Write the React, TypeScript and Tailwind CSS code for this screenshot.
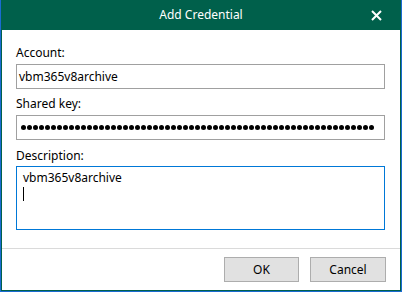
import React from "react";

const font = { fontFamily: '"Segoe UI", "Noto Sans", "Open Sans", sans-serif' };

function Label({ children }: { children: React.ReactNode }) {
  return <div className="h-4 text-[12px] leading-4 text-black">{children}</div>;
}

export default function App() {
  const dots = Array.from({ length: 59 });

  return (
    <div className="w-[402px] h-[292px] bg-[#1a6bd1] pl-[1px]" style={font}>
      <div className="w-[400px] h-[291px] flex flex-col bg-white border-x border-b border-[#00604b]">
        {/* title bar */}
        <div className="h-[30px] shrink-0 bg-[#00604b] grid grid-cols-[1fr_auto_1fr] items-center text-white">
          <div />
          <div className="text-[12px] leading-4">Add Credential</div>
          <div className="flex justify-end pr-[18px]">
            <svg width="11" height="11" viewBox="0 0 11 11">
              <path d="M1 1 L10 10 M10 1 L1 10" stroke="white" strokeWidth="2" />
            </svg>
          </div>
        </div>

        {/* form */}
        <div className="flex flex-col pl-[14px] pt-[15px]">
          <Label>Account:</Label>
          <div className="mt-[3px] w-[369px] h-[25px] border border-[#a0a0a0] flex items-center pl-[2px] text-[12px] text-black">
            vbm365v8archive
          </div>

          <div className="mt-[7px]">
            <Label>Shared key:</Label>
          </div>
          <div className="mt-[3px] w-[369px] h-[25px] border border-[#a0a0a0] flex items-center pl-[4px] gap-[1px]">
            {dots.map((_, i) => (
              <span key={i} className="w-[5px] h-[5px] rounded-full bg-black shrink-0" />
            ))}
          </div>

          <div className="mt-[8px]">
            <Label>Description:</Label>
          </div>
          <div className="mt-[2px] w-[369px] h-[64px] border border-[#0078d7] pl-[6px] pt-[3px] text-[12px] leading-4 text-black">
            <div>vbm365v8archive</div>
            <div className="w-px h-[14px] bg-black mt-[1px]" />
          </div>
        </div>

        <div className="mt-[18px] h-px bg-[#dadada]" />

        {/* footer */}
        <div className="flex justify-end gap-[11px] pt-[8px] pr-[14px]">
          <button className="w-[75px] h-[25px] bg-[#e1e1e1] border border-[#adadad] text-[12px] text-black">
            OK
          </button>
          <button className="w-[76px] h-[25px] bg-[#e1e1e1] border border-[#adadad] text-[12px] text-black">
            Cancel
          </button>
        </div>
      </div>
    </div>
  );
}
